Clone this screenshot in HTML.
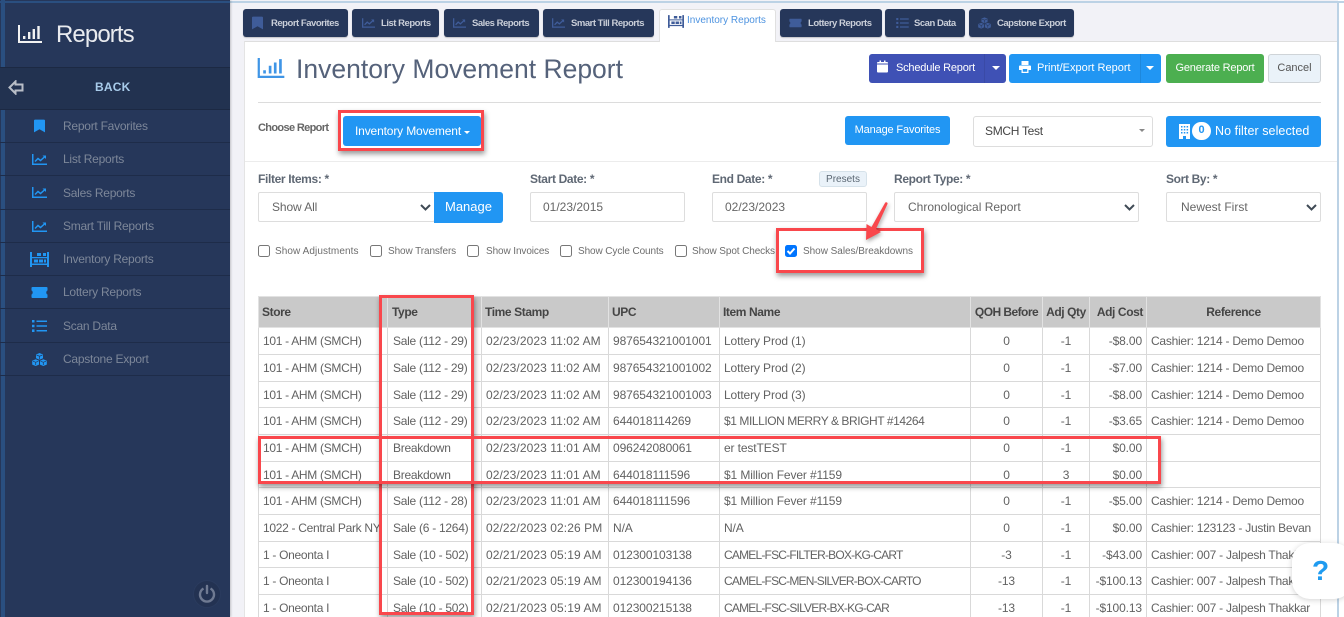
<!DOCTYPE html>
<html><head><meta charset="utf-8"><title>Inventory Movement Report</title>
<style>
*{box-sizing:border-box}
html,body{margin:0;padding:0;width:1344px;height:617px;overflow:hidden;background:#fff;font-family:"Liberation Sans",sans-serif}
#wrap{position:absolute;left:0;top:0;width:1344px;height:617px;overflow:hidden}
.a{position:absolute}
.t{position:absolute;white-space:nowrap}
#side{left:0;top:0;width:230px;height:617px;background:#26375a;box-shadow:1px 0 2px rgba(0,0,0,.2)}
.item{position:absolute;left:0;width:230px;height:33px;border-bottom:1px solid #1e2c49;color:#7d8799;font-size:12px;letter-spacing:-.25px}
.item span{position:absolute;left:63px;top:8px;line-height:16px;white-space:nowrap}
.item svg{position:absolute;color:#2196f3}
.tab{position:absolute;top:9px;height:28px;background:#26375a;border-radius:3px;color:#c9ced8;font-size:9.500px;font-weight:bold;line-height:29px;letter-spacing:-.48px;white-space:nowrap;box-shadow:0 1px 1px rgba(0,0,0,.2)}
.tab svg{position:absolute;color:#3f5c99}
.tab span{position:absolute;top:0}
.btn{position:absolute;border-radius:3px;color:#fff;font-size:11px;text-align:center;white-space:nowrap}
.lbl{position:absolute;font-size:12px;font-weight:bold;color:#5f6874;line-height:14px;white-space:nowrap;letter-spacing:-.35px}
.inp{position:absolute;background:#fff;border:1px solid #ddd;border-radius:2px;height:30px;top:192px;font-size:12px;color:#666;line-height:28px;white-space:nowrap}
.chev{position:absolute;top:11px;width:11px;height:7px}
.cb{position:absolute;top:245px;width:12px;height:12px;border:1px solid #777;border-radius:2.5px;background:#fff}
.cl{position:absolute;top:245px;font-size:10px;line-height:14px;color:#6d6d6d;white-space:nowrap;letter-spacing:-.1px}
table{position:absolute;left:258px;top:296px;width:1062px;border-collapse:collapse;table-layout:fixed;font-size:12px;color:#626262}
th{background:#c9c9c9;border:1px solid #e2e2e2;color:#454545;font-size:12px;text-align:left;padding:0 3px;height:31px;letter-spacing:-.4px;white-space:nowrap;overflow:hidden}
td{border:1px solid #d9d9d9;padding:0 4px;white-space:nowrap;overflow:hidden;background:#fff;letter-spacing:-.12px}
td:nth-child(1){letter-spacing:-.3px}
td:nth-child(2){padding-left:5px;letter-spacing:-.27px}
td:nth-child(3){letter-spacing:.08px}
td:nth-child(4){letter-spacing:-.1px}
td:nth-child(9){letter-spacing:-.25px}
td.u{letter-spacing:-.8px}
td.v{letter-spacing:-.43px}
.c{text-align:center}.r{text-align:right}
.red{position:absolute;border:3px solid #f9474c;box-shadow:1px 3px 5px rgba(0,0,0,.4)}
</style></head>
<body>
<div id="wrap">
<svg width="0" height="0" style="position:absolute">
<symbol id="i-bars" viewBox="0 0 24 18"><path fill="currentColor" d="M0 0h2v16h22v2H0z"/><path fill="currentColor" d="M5 11h2.400v3H5zM10 7h2.400v7H10zM14.600 4h2.400v10h-2.400zM19.300 1h2.400v13h-2.400z"/></symbol>
<symbol id="i-book" viewBox="0 0 12 14"><path fill="currentColor" d="M0 1.200C0 .5.500 0 1.200 0h9.600c.7 0 1.200.5 1.200 1.200V14L6 10.500 0 14z"/></symbol>
<symbol id="i-line" viewBox="0 0 15 11"><path fill="currentColor" d="M0 0h1.500v9.500H15V11H0z"/><path fill="none" stroke="currentColor" stroke-width="1.500" d="M3 7.500l3-3 2.500 2L13 2.500"/><path fill="currentColor" d="M10.500 1.500H14V5z"/></symbol>
<symbol id="i-inv" viewBox="0 0 19 15"><path fill="currentColor" d="M0 0h2v15H0zM17 0h2v15h-2zM2 11.500h15v1.500H2zM2 5h15v1.200H2z"/><path fill="currentColor" d="M4 7.500h4v3H4zM9 7.500h4v3H9zM7 1h4v3H7zM13 1h3v3h-3zM14 7.500h2v3h-2z"/></symbol>
<symbol id="i-tick" viewBox="0 0 17 11"><path fill="currentColor" d="M1.500 0h14c.6 0 1 .4 1 1v2.500c-1.600.3-1.600 3.700 0 4V10c0 .6-.4 1-1 1h-14c-.6 0-1-.4-1-1V7.500c1.600-.3 1.600-3.700 0-4V1c0-.6.4-1 1-1z"/></symbol>
<symbol id="i-list" viewBox="0 0 15 12"><path fill="currentColor" d="M0 0h2.500v2.500H0zM0 4.700h2.500v2.500H0zM0 9.400h2.500V12H0zM4.500 .5H15V2H4.500zM4.500 5.200H15v1.500H4.500zM4.500 10H15v1.500H4.500z"/></symbol>
<symbol id="i-cube" viewBox="0 0 15 13"><path fill="currentColor" d="M7.500 0l3.500 1.500v3.800L7.500 6.800 4 5.300V1.500zM3.700 6.300l3.300 1.400v3.900L3.700 13 .2 11.600V7.700zM11.300 6.300l3.500 1.400v3.900L11.300 13 8 11.600V7.700z"/><path fill="none" stroke="#26375a" stroke-width=".7" d="M4.500 2l3 1.200 3-1.200M7.500 3.200v3M1 8.200l2.700 1.100 2.700-1.100M3.700 9.300V12M8.600 8.200l2.700 1.100 2.700-1.100M11.300 9.300V12"/></symbol>
<symbol id="i-cal" viewBox="0 0 11 12"><path fill="currentColor" d="M0 4h11v7c0 .6-.4 1-1 1H1c-.6 0-1-.4-1-1zM1 1.500h1.500V0H4v1.500h3V0h1.500v1.500H10c.6 0 1 .4 1 1V3H0v-.5c0-.6.4-1 1-1z"/></symbol>
<symbol id="i-print" viewBox="0 0 12 12"><path fill="currentColor" d="M2.500 0h7v4h-7zM1 4.500h10c.6 0 1 .4 1 1v3.500H9.500v3h-7V9H0V5.500c0-.6.400-1 1-1zM3.800 8v2.700h4.400V8z"/></symbol>
<symbol id="i-chev" viewBox="0 0 11 7"><path fill="none" stroke="#3f4a55" stroke-width="2" d="M1 1l4.500 4.500L10 1"/></symbol>
</svg>

<!-- main background -->
<div class="a" style="left:230px;top:0;width:1108px;height:617px;background:#f2f2f7"></div>
<div class="a" style="left:0;top:1px;width:1344px;height:2px;background:#bcd2e5"></div>
<div class="a" style="left:1337px;top:1px;width:2px;height:616px;background:#bcd2e5"></div>
<div class="a" style="left:1339px;top:3px;width:5px;height:614px;background:#fff"></div>
<div class="a" style="left:244px;top:41px;width:1093px;height:576px;background:#fff;border-top:1px solid #dedede;border-left:1px solid #e4e4e4"></div>

<!-- sidebar -->
<div id="side" class="a">
  <div class="a" style="left:1px;top:0;width:4px;height:617px;background:#2a4f80"></div>
  <div class="a" style="left:0;top:1px;width:230px;height:2px;background:#2a4f80"></div>
  <svg class="a" style="left:18px;top:25px;color:#f2f2f2" width="24" height="18"><use href="#i-bars"/></svg>
  <div class="t" style="left:56px;top:19px;font-size:24px;line-height:32px;color:#e9ebef;letter-spacing:-.9px">Reports</div>
  <div class="a" style="left:0;top:67px;width:230px;height:43px;background:#223250;border-top:1px solid #1c2943;border-bottom:1px solid #1c2943"></div>
  <svg class="a" style="left:8px;top:80px" width="16" height="15" viewBox="0 0 16 15"><path fill="none" stroke="#b9bec7" stroke-width="2" d="M7.500 1.500L1.500 7.500l6 6V10.500H14.500v-6H7.500z"/></svg>
  <div class="t" style="left:95px;top:80px;font-size:12px;font-weight:bold;line-height:15px;color:#a8cbea;letter-spacing:.2px">BACK</div>
  <div class="item" style="top:110px"><svg style="left:34px;top:9px" width="11" height="14"><use href="#i-book"/></svg><span>Report Favorites</span></div>
  <div class="item" style="top:143px"><svg style="left:32px;top:11px" width="15" height="11"><use href="#i-line"/></svg><span>List Reports</span></div>
  <div class="item" style="top:176px;height:34px"><svg style="left:32px;top:11px" width="15" height="11"><use href="#i-line"/></svg><span style="top:9px">Sales Reports</span></div>
  <div class="item" style="top:210px"><svg style="left:32px;top:11px" width="15" height="11"><use href="#i-line"/></svg><span>Smart Till Reports</span></div>
  <div class="item" style="top:243px"><svg style="left:30px;top:9px" width="19" height="15"><use href="#i-inv"/></svg><span>Inventory Reports</span></div>
  <div class="item" style="top:276px"><svg style="left:31px;top:11px" width="17" height="11"><use href="#i-tick"/></svg><span>Lottery Reports</span></div>
  <div class="item" style="top:309px;height:34px"><svg style="left:32px;top:11px" width="15" height="12"><use href="#i-list"/></svg><span style="top:9px">Scan Data</span></div>
  <div class="item" style="top:343px"><svg style="left:32px;top:10px" width="15" height="13"><use href="#i-cube"/></svg><span>Capstone Export</span></div>
  <div class="a" style="left:193px;top:580px;width:28px;height:28px;border-radius:50%;background:#233252;border:1px solid #2a3b5e"></div>
  <svg class="a" style="left:198px;top:584px" width="18" height="19" viewBox="0 0 18 19"><path fill="none" stroke="#6f7a92" stroke-width="2.400" d="M5.500 4.500a7 7 0 1 0 7 0"/><path stroke="#6f7a92" stroke-width="2.400" stroke-linecap="round" d="M9 2v7"/></svg>
</div>

<!-- tabs -->
<div class="tab" style="left:243px;width:105px"><svg style="left:9px;top:7px" width="11" height="14"><use href="#i-book"/></svg><span style="left:28px">Report Favorites</span></div>
<div class="tab" style="left:352px;width:87px"><svg style="left:10px;top:9px" width="13" height="10"><use href="#i-line"/></svg><span style="left:29px">List Reports</span></div>
<div class="tab" style="left:444px;width:95px"><svg style="left:9px;top:9px" width="13" height="10"><use href="#i-line"/></svg><span style="left:28px">Sales Reports</span></div>
<div class="tab" style="left:543px;width:111px"><svg style="left:9px;top:9px" width="13" height="10"><use href="#i-line"/></svg><span style="left:28px">Smart Till Reports</span></div>
<div class="a" style="left:659px;top:9px;width:117px;height:33px;background:#fff;border:1px solid #e0e0e0;border-bottom:0;border-radius:3px 3px 0 0"></div>
<svg class="a" style="left:668px;top:15px;color:#3f5c99" width="16" height="13"><use href="#i-inv"/></svg>
<div class="t" style="left:687px;top:14px;font-size:10px;line-height:14px;color:#4d93e0">Inventory Reports</div>
<div class="tab" style="left:780px;width:102px"><svg style="left:9px;top:9px" width="13" height="10"><use href="#i-tick"/></svg><span style="left:28px">Lottery Reports</span></div>
<div class="tab" style="left:885px;width:80px"><svg style="left:11px;top:9px" width="13" height="10"><use href="#i-list"/></svg><span style="left:29px">Scan Data</span></div>
<div class="tab" style="left:969px;width:105px"><svg style="left:9px;top:8px" width="13" height="12"><use href="#i-cube"/></svg><span style="left:28px">Capstone Export</span></div>

<!-- title -->
<svg class="a" style="left:257px;top:58px;color:#3f95e6" width="28" height="20"><use href="#i-bars"/></svg>
<div class="t" style="left:296px;top:51px;font-size:26.500px;line-height:36px;color:#55627a">Inventory Movement Report</div>

<!-- action buttons -->
<div class="btn" style="left:869px;top:54px;width:137px;height:29px;background:#3f51b5"></div>
<div class="a" style="left:984px;top:54px;width:1px;height:29px;background:#3a4aa6"></div>
<svg class="a" style="left:877px;top:60px;color:#fff" width="11" height="13"><use href="#i-cal"/></svg>
<div class="t" style="left:896px;top:61px;font-size:11px;line-height:14px;color:#fff;letter-spacing:-.2px">Schedule Report</div>
<div class="a" style="left:992px;top:66px;border:4px solid transparent;border-top-color:#fff;border-bottom:0"></div>
<div class="btn" style="left:1009px;top:54px;width:152px;height:29px;background:#2196f3"></div>
<div class="a" style="left:1140px;top:54px;width:1px;height:29px;background:#1e88dc"></div>
<svg class="a" style="left:1019px;top:61px;color:#fff" width="12" height="12"><use href="#i-print"/></svg>
<div class="t" style="left:1037px;top:61px;font-size:11px;line-height:14px;color:#fff">Print/Export Report</div>
<div class="a" style="left:1146px;top:66px;border:4px solid transparent;border-top-color:#fff;border-bottom:0"></div>
<div class="btn" style="left:1166px;top:54px;width:98px;height:29px;background:#4caf50;line-height:29px;font-size:11px;letter-spacing:-.2px">Generate Report</div>
<div class="btn" style="left:1268px;top:54px;width:53px;height:29px;background:#eaf2f9;border:1px solid #cfd4d8;color:#555;line-height:27px;font-size:11px">Cancel</div>

<div class="a" style="left:258px;top:102px;width:1063px;height:1px;background:#dcdcdc"></div>

<!-- choose report row -->
<div class="t" style="left:258px;top:121px;font-size:11px;font-weight:bold;line-height:14px;color:#666;letter-spacing:-.65px">Choose Report</div>
<div class="btn" style="left:343px;top:116px;width:138px;height:30px;background:#2196f3;font-size:12px;line-height:31px;text-align:left;padding-left:12px;letter-spacing:-.15px">Inventory Movement</div>
<div class="a" style="left:464px;top:131px;border:3px solid transparent;border-top-color:#fff;border-bottom:0"></div>
<div class="btn" style="left:845px;top:116px;width:105px;height:29px;background:#2196f3;font-size:11px;line-height:29px;letter-spacing:-.15px">Manage Favorites</div>
<div class="a" style="left:973px;top:116px;width:180px;height:31px;border:1px solid #ddd;border-radius:3px;background:#fff;font-size:12px;line-height:29px;color:#444;padding-left:11px;letter-spacing:-.3px">SMCH Test</div>
<div class="a" style="left:1139px;top:129px;border:3.500px solid transparent;border-top-color:#888;border-bottom:0"></div>
<div class="btn" style="left:1166px;top:116px;width:155px;height:31px;background:#2196f3"></div>
<svg class="a" style="left:1179px;top:124px" width="11" height="15" viewBox="0 0 11 15"><path fill="#fff" d="M0 0h11v15H7v-3H4v3H0z"/><path fill="#2196f3" d="M2 2h1.500v1.500H2zM4.800 2h1.500v1.500H4.800zM7.600 2h1.500v1.500H7.600zM2 5h1.500v1.500H2zM4.800 5h1.500v1.500H4.800zM7.600 5h1.500v1.500H7.600zM2 8h1.500v1.500H2zM4.800 8h1.500v1.500H4.800zM7.600 8h1.500v1.500H7.600z"/></svg>
<div class="a" style="left:1192px;top:122px;width:19px;height:18px;border-radius:9px;background:#fff;color:#2196f3;font-size:11px;font-weight:bold;text-align:center;line-height:17px">0</div>
<div class="t" style="left:1215px;top:123px;font-size:12.500px;line-height:16px;color:#fff;letter-spacing:.07px">No filter selected</div>

<div class="a" style="left:245px;top:161px;width:1092px;height:1px;background:#ececec"></div>

<!-- filters -->
<div class="lbl" style="left:258px;top:172px">Filter Items: *</div>
<div class="inp" style="left:258px;width:177px;padding-left:13px;letter-spacing:-.1px">Show All<svg class="chev" style="left:161px"><use href="#i-chev"/></svg></div>
<div class="btn" style="left:434px;top:192px;width:69px;height:31px;background:#2196f3;font-size:13px;line-height:30px;border-radius:0 3px 3px 0">Manage</div>
<div class="lbl" style="left:530px;top:172px">Start Date: *</div>
<div class="inp" style="left:530px;width:155px;padding-left:12px">01/23/2015</div>
<div class="lbl" style="left:712px;top:172px">End Date: *</div>
<div class="btn" style="left:819px;top:171px;width:48px;height:16px;background:#eaf2f9;border:1px solid #d6e2ea;color:#5a6672;font-size:10px;line-height:15px">Presets</div>
<div class="inp" style="left:712px;width:155px;padding-left:12px">02/23/2023</div>
<div class="lbl" style="left:894px;top:172px">Report Type: *</div>
<div class="inp" style="left:894px;width:245px;padding-left:13px">Chronological Report<svg class="chev" style="left:229px"><use href="#i-chev"/></svg></div>
<div class="lbl" style="left:1166px;top:172px">Sort By: *</div>
<div class="inp" style="left:1166px;width:155px;padding-left:14px">Newest First<svg class="chev" style="left:139px"><use href="#i-chev"/></svg></div>

<!-- checkboxes -->
<div class="cb" style="left:258px"></div><div class="cl" style="left:275px;letter-spacing:.08px">Show Adjustments</div>
<div class="cb" style="left:370px"></div><div class="cl" style="left:388px">Show Transfers</div>
<div class="cb" style="left:467px"></div><div class="cl" style="left:486px">Show Invoices</div>
<div class="cb" style="left:560px"></div><div class="cl" style="left:578px">Show Cycle Counts</div>
<div class="cb" style="left:675px"></div><div class="cl" style="left:692px">Show Spot Checks</div>
<div class="cb" style="left:785px;background:#0075ff;border-color:#0075ff"><svg class="a" style="left:0;top:0" width="10" height="10" viewBox="0 0 10 10"><path fill="none" stroke="#fff" stroke-width="2" d="M1.500 5l2.500 2.500 4.500-5"/></svg></div>
<div class="cl" style="left:803px;letter-spacing:-.03px">Show Sales/Breakdowns</div>

<!-- table -->
<table>
<colgroup><col style="width:129px"><col style="width:94px"><col style="width:127px"><col style="width:111px"><col style="width:251px"><col style="width:72px"><col style="width:47px"><col style="width:57px"><col style="width:174px"></colgroup>
<tr><th>Store</th><th style="padding-left:4px">Type</th><th>Time Stamp</th><th>UPC</th><th>Item Name</th><th class="c" style="letter-spacing:-.55px">QOH Before</th><th class="c">Adj Qty</th><th class="r">Adj Cost</th><th class="c">Reference</th></tr>
<tr style="height:27px"><td>101 - AHM (SMCH)</td><td>Sale (112 - 29)</td><td>02/23/2023 11:02 AM</td><td>987654321001001</td><td>Lottery Prod (1)</td><td class="c">0</td><td class="c">-1</td><td class="r">-$8.00</td><td>Cashier: 1214 - Demo Demoo</td></tr>
<tr style="height:27px"><td>101 - AHM (SMCH)</td><td>Sale (112 - 29)</td><td>02/23/2023 11:02 AM</td><td>987654321001002</td><td>Lottery Prod (2)</td><td class="c">0</td><td class="c">-1</td><td class="r">-$7.00</td><td>Cashier: 1214 - Demo Demoo</td></tr>
<tr style="height:26px"><td>101 - AHM (SMCH)</td><td>Sale (112 - 29)</td><td>02/23/2023 11:02 AM</td><td>987654321001003</td><td>Lottery Prod (3)</td><td class="c">0</td><td class="c">-1</td><td class="r">-$8.00</td><td>Cashier: 1214 - Demo Demoo</td></tr>
<tr style="height:27px"><td>101 - AHM (SMCH)</td><td>Sale (112 - 29)</td><td>02/23/2023 11:02 AM</td><td>644018114269</td><td class="v">$1 MILLION MERRY &amp; BRIGHT #14264</td><td class="c">0</td><td class="c">-1</td><td class="r">-$3.65</td><td>Cashier: 1214 - Demo Demoo</td></tr>
<tr style="height:27px"><td>101 - AHM (SMCH)</td><td>Breakdown</td><td>02/23/2023 11:01 AM</td><td>096242080061</td><td>er testTEST</td><td class="c">0</td><td class="c">-1</td><td class="r">$0.00</td><td></td></tr>
<tr style="height:26px"><td>101 - AHM (SMCH)</td><td>Breakdown</td><td>02/23/2023 11:01 AM</td><td>644018111596</td><td>$1 Million Fever #1159</td><td class="c">0</td><td class="c">3</td><td class="r">$0.00</td><td></td></tr>
<tr style="height:27px"><td>101 - AHM (SMCH)</td><td>Sale (112 - 28)</td><td>02/23/2023 11:01 AM</td><td>644018111596</td><td>$1 Million Fever #1159</td><td class="c">0</td><td class="c">-1</td><td class="r">-$5.00</td><td>Cashier: 1214 - Demo Demoo</td></tr>
<tr style="height:27px"><td>1022 - Central Park NY</td><td>Sale (6 - 1264)</td><td>02/22/2023 02:26 PM</td><td>N/A</td><td>N/A</td><td class="c">0</td><td class="c">-1</td><td class="r">$0.00</td><td>Cashier: 123123 - Justin Bevan</td></tr>
<tr style="height:26px"><td>1 - Oneonta I</td><td>Sale (10 - 502)</td><td>02/21/2023 05:19 AM</td><td>012300103138</td><td class="u">CAMEL-FSC-FILTER-BOX-KG-CART</td><td class="c">-3</td><td class="c">-1</td><td class="r">-$43.00</td><td>Cashier: 007 - Jalpesh Thakkar</td></tr>
<tr style="height:27px"><td>1 - Oneonta I</td><td>Sale (10 - 502)</td><td>02/21/2023 05:19 AM</td><td>012300194136</td><td class="u">CAMEL-FSC-MEN-SILVER-BOX-CARTO</td><td class="c">-13</td><td class="c">-1</td><td class="r">-$100.13</td><td>Cashier: 007 - Jalpesh Thakkar</td></tr>
<tr style="height:27px"><td>1 - Oneonta I</td><td>Sale (10 - 502)</td><td>02/21/2023 05:19 AM</td><td>012300215138</td><td class="u">CAMEL-FSC-SILVER-BX-KG-CAR</td><td class="c">-13</td><td class="c">-1</td><td class="r">-$100.13</td><td>Cashier: 007 - Jalpesh Thakkar</td></tr>
</table>

<!-- red annotations -->
<div class="red" style="left:338px;top:110px;width:146px;height:41px"></div>
<div class="red" style="left:776px;top:228px;width:148px;height:45px"></div>
<div class="red" style="left:379px;top:295px;width:95px;height:320px"></div>
<div class="red" style="left:258px;top:436px;width:903px;height:48px"></div>
<svg class="a" style="left:855px;top:195px;filter:drop-shadow(1px 2px 2px rgba(0,0,0,.35))" width="45" height="55" viewBox="855 195 45 55"><path fill="#f9474c" d="M885 203c1-1.500 3-.5 2.500 1L876 229l5 3-15 8 .5-16 5 3z"/></svg>

<!-- help -->
<div class="a" style="left:1292px;top:543px;width:60px;height:56px;background:#fff;border-radius:18px;box-shadow:0 1px 6px rgba(0,0,0,.18)"></div>
<div class="t" style="left:1312px;top:553px;font-size:28px;font-weight:bold;line-height:36px;color:#1f9bf0">?</div>
</div>
</body></html>
